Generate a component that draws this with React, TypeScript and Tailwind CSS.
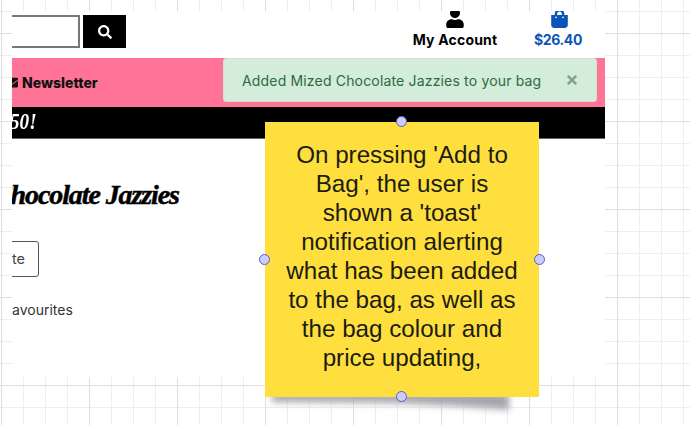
import React from "react";
import { FaSearch, FaUser, FaShoppingBag, FaTimes, FaEnvelope } from "react-icons/fa";

const poppins = "font-['Inter','Noto_Sans',sans-serif]";

const stickyLines = [
  "On pressing 'Add to",
  "Bag', the user is",
  "shown a 'toast'",
  "notification alerting",
  "what has been added",
  "to the bag, as well as",
  "the bag colour and",
  "price updating,",
];

const Handle = ({ className }: { className: string }) => (
  <div
    className={`absolute w-[11px] h-[11px] rounded-full bg-[#ccccff] border border-[#5a5ad0] ${className}`}
  />
);

const App = () => {
  return (
    <div className="relative w-[690px] h-[425px] overflow-hidden bg-white bg-[linear-gradient(#dedede_1px,transparent_1px),linear-gradient(90deg,#dedede_1px,transparent_1px),linear-gradient(#eeeeee_1px,transparent_1px),linear-gradient(90deg,#eeeeee_1px,transparent_1px)] bg-[size:88px_88px,88px_88px,22px_22px,22px_22px] bg-[position:0_33px,1px_0,0_11px,1px_0]">
      {/* the pasted page screenshot */}
      <div className="absolute left-[12px] top-[11px] w-[593px] h-[366px] overflow-hidden bg-white flex flex-col">
        <header className="h-[36px] flex items-start">
          <div className="w-[68px] h-[33px] mt-[4px] border-2 border-l-0 border-[#777777] bg-white" />
          <div className="w-[43px] h-[33px] mt-[4px] ml-[3px] bg-black text-white flex items-center justify-center">
            <FaSearch size={14} />
          </div>
          <div className="ml-[287px] flex flex-col items-center w-[84px] text-black">
            <FaUser size={20} className="-mt-[3px]" />
            <span className={`${poppins} text-[14px] font-bold leading-[14px] mt-[5px] tracking-[0.2px] whitespace-nowrap`}>
              My Account
            </span>
          </div>
          <div className="ml-[38px] flex flex-col items-center w-[48px] text-[#0b55b8]">
            <FaShoppingBag size={19} className="-mt-[2px]" />
            <span className={`${poppins} text-[14px] font-bold leading-[14px] mt-[5px] mr-[2px] tracking-[-0.4px] whitespace-nowrap`}>
              $26.40
            </span>
          </div>
        </header>
        <div className="mt-[11px] h-[49px] bg-[#ff7396] flex items-center relative">
          <span className={`${poppins} flex items-center text-[14px] font-extrabold text-[#111111] whitespace-nowrap`}>
            <FaEnvelope size={13} className="-ml-[7px] mr-[4px]" />
            Newsletter
          </span>
          {/* toast */}
          <div className="absolute left-[211px] top-0 w-[374px] h-[44px] rounded-[3px] bg-[#d4ecda] border border-[#c9e5d1] flex items-center justify-between pl-[18px] pr-[17px] text-[#2c6a3f]">
            <span className={`${poppins} text-[14px] tracking-[0.17px] whitespace-nowrap`}>
              Added Mized Chocolate Jazzies to your bag
            </span>
            <FaTimes size={14} className="text-[#7da68a]" />
          </div>
        </div>
        <div className="h-[32px] bg-black border-b border-[#666666] text-white font-['Liberation_Serif',serif] italic font-bold text-[24px] leading-[28px] whitespace-nowrap overflow-hidden">
          <span className="block -ml-[2px] origin-left scale-x-[0.8]">50!</span>
        </div>
        <h1 className="mt-[38px] -ml-[19px] font-['Liberation_Serif',serif] italic font-bold text-[28px] leading-[36px] tracking-[-1.1px] text-black [-webkit-text-stroke:0.5px_black] whitespace-nowrap">
          Chocolate Jazzies
        </h1>
        <div className="mt-[28px] -ml-[2px] w-[29px] h-[36px] border border-[#555555] rounded-[3px] flex items-center justify-end pr-[13px] text-[#444444]">
          <span className={`${poppins} text-[14.5px]`}>te</span>
        </div>
        <span className={`${poppins} mt-[23px] text-[14px] leading-[20px] text-[#333333] whitespace-nowrap`}>
          avourites
        </span>
      </div>

      {/* curled shadow under the note */}
      <svg className="absolute left-[255px] top-[385px]" width="275" height="40" viewBox="0 0 275 40">
        <defs>
          <filter id="soft" x="-10%" y="-50%" width="120%" height="200%">
            <feGaussianBlur stdDeviation="3.500" />
          </filter>
        </defs>
        <path d="M17 8 H254 V25 Q200 20 130 18 Q60 17 17 17 Z" fill="#a3a5aa" filter="url(#soft)" />
      </svg>

      {/* sticky note */}
      <div className="absolute left-[265px] top-[122px] w-[274px] h-[275px] bg-[#ffdf3d] flex flex-col items-center pt-[18px] font-['Liberation_Sans',Arial,sans-serif] text-[24.2px] leading-[29px] text-[#1c1c14]">
        {stickyLines.map((line) => (
          <div key={line} className="whitespace-nowrap">
            {line}
          </div>
        ))}
      </div>
      <Handle className="left-[396px] top-[116px]" />
      <Handle className="left-[259px] top-[254px]" />
      <Handle className="left-[534px] top-[254px]" />
      <Handle className="left-[396px] top-[391px]" />
    </div>
  );
};

export default App;
